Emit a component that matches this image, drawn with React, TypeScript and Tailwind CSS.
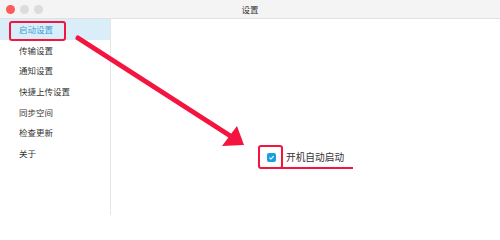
import React from "react";

const items = ["启动设置", "传输设置", "通知设置", "快捷上传设置", "同步空间", "检查更新", "关于"];

export default function App() {
  return (
    <div
      className="relative w-[500px] h-[215px] overflow-hidden bg-white flex flex-col"
      style={{ fontFamily: '"Noto Sans CJK SC", "Noto Sans", sans-serif' }}
    >
      <div className="relative h-[19px] shrink-0 bg-[#f5f4f5] border-b border-[#e2e1e2] flex items-center justify-center">
        <div className="absolute left-[6px] top-[5px] flex gap-[5px]">
          <span className="w-[9px] h-[9px] rounded-full bg-[#fc5b57]" />
          <span className="w-[9px] h-[9px] rounded-full bg-[#dcdcdc]" />
          <span className="w-[9px] h-[9px] rounded-full bg-[#dcdcdc]" />
        </div>
        <span className="text-[8.5px] text-[#333] leading-none">设置</span>
      </div>
      <div className="flex flex-1">
        <div className="w-[111px] shrink-0 border-r border-[#e6e6e6] flex flex-col">
          {items.map((t, i) => (
            <div
              key={t}
              className={
                i === 0
                  ? "h-[20.7px] flex items-center pl-[19px] bg-[#daeefa] text-[#3a9ed8] text-[8.5px]"
                  : "h-[20.7px] flex items-center pl-[19px] text-[#333] text-[8.5px]"
              }
            >
              {t}
            </div>
          ))}
        </div>
        <div className="flex-1 relative">
          <div className="absolute left-[156px] top-[134px] flex items-center gap-[10px]">
            <span className="w-[9px] h-[9px] rounded-[2px] bg-[#1a9fe0] flex items-center justify-center">
              <svg width="7" height="7" viewBox="0 0 10 10">
                <path d="M2 5.2 L4.2 7.2 L8 3" stroke="white" strokeWidth="1.6" fill="none" />
              </svg>
            </span>
            <span className="text-[9.7px] text-[#333] leading-none">开机自动启动</span>
          </div>
        </div>
      </div>
      {/* annotations */}
      <div className="absolute left-[9px] top-[21px] w-[57px] h-[20px] border-2 border-[#f31540] rounded-[3px]" />
      <div className="absolute left-[258px] top-[145px] w-[25px] h-[24px] border-2 border-[#f31540] rounded-[3px]" />
      <div className="absolute left-[275px] top-[167px] w-[78px] h-[2px] bg-[#f31540]" />
      <svg className="absolute left-0 top-0" width="500" height="215" viewBox="0 0 500 215">
        <line x1="78" y1="38" x2="232" y2="137" stroke="#f31540" strokeWidth="5" strokeLinecap="round" />
        <polygon points="244,145 237,126 222,146" fill="#f31540" />
      </svg>
    </div>
  );
}
